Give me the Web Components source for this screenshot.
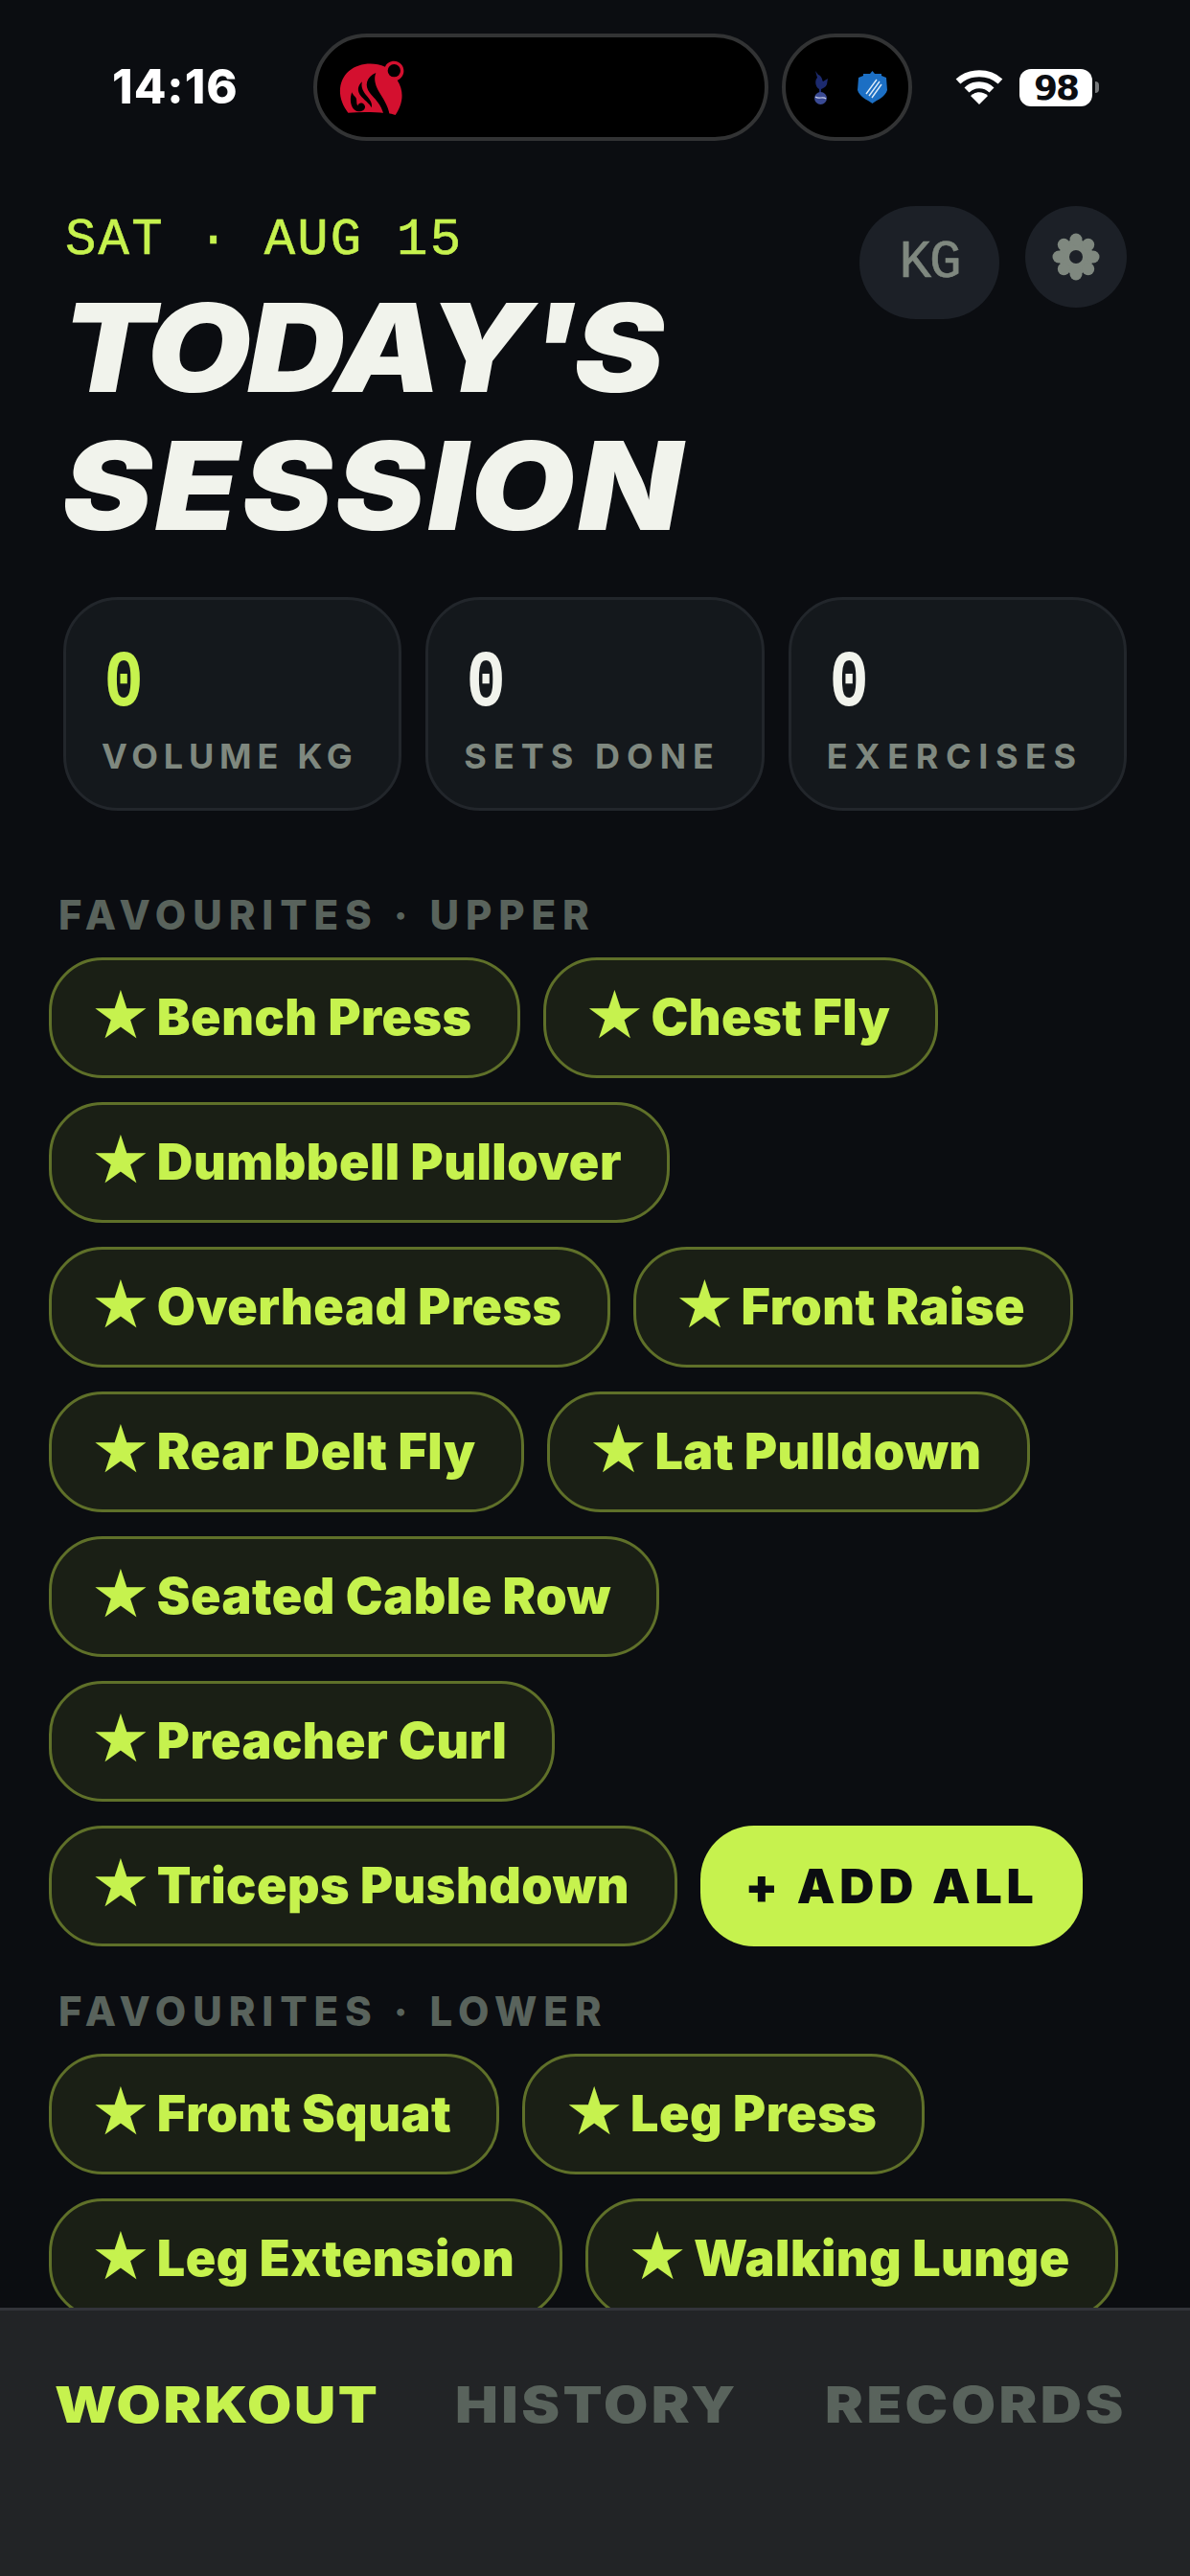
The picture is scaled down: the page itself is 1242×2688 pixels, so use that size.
<!DOCTYPE html>
<html>
<head>
<meta charset="utf-8">
<style>
    html, body { margin: 0; background: #0b0d11; }
    body { width: 1242px; height: 2688px; overflow: hidden; font-family: Inter, "Liberation Sans", sans-serif; }
</style>
</head>
<body>
<app-shell>
    <status-bar></status-bar>
    <session-header></session-header>
    <stat-row>
        <stat-card value="0" label="VOLUME KG" spacing="5.8" accent></stat-card>
        <stat-card value="0" label="SETS DONE" spacing="7"></stat-card>
        <stat-card value="0" label="EXERCISES" spacing="7.6"></stat-card>
    </stat-row>
    <fav-section title="FAVOURITES · UPPER">
        <fav-chip>Bench Press</fav-chip>
        <fav-chip>Chest Fly</fav-chip>
        <fav-chip>Dumbbell Pullover</fav-chip>
        <fav-chip>Overhead Press</fav-chip>
        <fav-chip>Front Raise</fav-chip>
        <fav-chip>Rear Delt Fly</fav-chip>
        <fav-chip>Lat Pulldown</fav-chip>
        <fav-chip>Seated Cable Row</fav-chip>
        <fav-chip>Preacher Curl</fav-chip>
        <fav-chip>Triceps Pushdown</fav-chip>
        <add-all></add-all>
    </fav-section>
    <fav-section title="FAVOURITES · LOWER">
        <fav-chip>Front Squat</fav-chip>
        <fav-chip>Leg Press</fav-chip>
        <fav-chip>Leg Extension</fav-chip>
        <fav-chip>Walking Lunge</fav-chip>
    </fav-section>
    <tab-bar slot="tabs"></tab-bar>
</app-shell>

<script>
class AppShell extends HTMLElement {
    constructor () {
        super();
        this.attachShadow({ mode: 'open' });
        this.shadowRoot.innerHTML = `
        <style>
            :host { display: flex; flex-direction: column; height: 2688px; }
            main { flex: 1; min-height: 0; overflow: hidden; }
        </style>
        <main><slot></slot></main>
        <slot name="tabs"></slot>
        `;
    }
}

class StatusBar extends HTMLElement {
    constructor () {
        super();
        this.attachShadow({ mode: 'open' });
        this.shadowRoot.innerHTML = `
        <style>
            :host { display: flex; align-items: center; height: 112px; padding: 35px 0 0 117px; color: #fff; }
            .time { width: 128px; margin-right: 82px; font: 800 49px/1 Inter, sans-serif; letter-spacing: 1px; white-space: nowrap; position: relative; top: -1px; }
            .island { box-sizing: border-box; height: 112px; background: #000; border: 4px solid #323334; border-radius: 56px; display: flex; align-items: center; }
            .main { width: 475px; padding-left: 23px; margin-right: 14px; }
            .teams { width: 136px; padding-left: 6px; justify-content: center; gap: 30px; }
            .wifi { margin-left: 45px; }
            .battery { margin-left: 17px; width: 76px; height: 39px; background: #fff; border-radius: 12px; color: #0b0d11; font: 700 36px/39px "DejaVu Sans", sans-serif; text-align: center; letter-spacing: -2px; }
            .nub { margin-left: 3px; width: 4px; height: 12px; background: #77797b; border-radius: 0 6px 6px 0; }
            svg { display: block; }
        </style>
        <div class="time">14:16</div>
        <div class="island main">
            <svg width="70" height="60" viewBox="100 120 210 180">
                <path fill="#d4102f" d="M128 290 C92 245 96 190 130 160 C160 135 205 130 244 146 C250 128 280 120 296 140 C310 160 298 182 282 188 C306 225 298 265 276 297 C262 290 190 285 128 290Z"/>
                <circle cx="272" cy="158" r="20" fill="#000"/>
                <path fill="#000" d="M215 165 C185 178 178 205 196 228 C210 246 232 262 240 298 L258 298 C254 268 236 244 222 220 C212 200 208 182 215 165Z"/>
                <path fill="#000" d="M172 193 C158 205 154 222 170 240 C185 256 196 262 201 274 C206 260 194 246 182 232 C172 218 168 206 172 193Z"/>
                <path fill="#000" d="M140 226 C130 250 138 284 160 286 C178 286 186 274 178 264 C170 256 160 260 158 268 C152 260 158 248 150 240 C146 236 142 232 140 226Z"/>
            </svg>
        </div>
        <div class="island teams">
            <svg width="17" height="36" viewBox="0 0 17 36">
                <path fill="#1c2a6e" d="M3 1 L6 5 C10 6 10 11 11 12 L16 9 L15 15 C14 18 11 19 9 20 L9 24 L7 24 L7 20 C3 18 2 11 5 8 Z"/>
                <circle cx="8.5" cy="29.5" r="6.5" fill="#3a4a94"/>
                <path stroke="#c9d0ea" stroke-width="1.2" fill="none" d="M3 28 C7 31 11 27 14 30"/>
            </svg>
            <svg width="31" height="34" viewBox="0 0 31 34">
                <path fill="#1c6fc4" d="M15.5 0 L18 3 L25 3 L25 5 L30 7 L31 20 C29 27 21 30 15.5 34 C10 30 2 27 0 20 L1 7 L6 5 L6 3 L13 3Z"/>
                <path stroke="#dcebf8" stroke-width="1.4" fill="none" d="M9 24 L20 9 M12 26 L23 11 M15 28 L25 14"/>
            </svg>
        </div>
        <svg class="wifi" width="50" height="36" viewBox="0 0 50 36">
            <path fill="none" stroke="#fff" stroke-width="7" d="M3 12 C15 1 35 1 47 12"/>
            <path fill="none" stroke="#fff" stroke-width="7" d="M12 21 C19 14 31 14 38 21"/>
            <path fill="#fff" d="M25 36 L16 27 C21 22 29 22 34 27Z"/>
        </svg>
        <div class="battery">98</div>
        <div class="nub"></div>
        `;
    }
}

class SessionHeader extends HTMLElement {
    constructor () {
        super();
        this.attachShadow({ mode: 'open' });
        this.shadowRoot.innerHTML = `
        <style>
            :host { display: flex; justify-content: space-between; align-items: flex-start; padding: 68px 66px 0 68px; }
            .date { padding-top: 9px; color: #c6f24e; font: 400 54px/54px "Liberation Mono", monospace; letter-spacing: 2.2px; white-space: pre; -webkit-text-stroke: 0.6px #c6f24e; }
            h1 { margin: 13px 0 0 -3px; color: #f1f3ec; font: italic 900 128px/144px Inter, "Liberation Sans", sans-serif; white-space: nowrap; transform: scaleX(1.1); transform-origin: left; }
            .l1 { letter-spacing: -3.6px; }
            .l2 { letter-spacing: 2.9px; }
            .actions { display: flex; gap: 27px; }
            .unit { box-sizing: border-box; width: 146px; height: 118px; border-radius: 59px; background: #1c2027; color: #7f887f; font: 400 56px/118px "Liberation Mono", monospace; letter-spacing: -2px; text-align: center; -webkit-text-stroke: 0.6px #7f887f; }
            .gear { width: 106px; height: 106px; border-radius: 50%; background: #1c2027; display: flex; align-items: center; justify-content: center; }
        </style>
        <div>
            <div class="date">SAT · AUG 15</div>
            <h1><span class="l1">TODAY'S</span><br><span class="l2">SESSION</span></h1>
        </div>
        <div class="actions">
            <div class="unit">KG</div>
            <div class="gear">
                <svg width="50" height="50" viewBox="-25 -25 50 50">
                    <g fill="#7f887f">
                        <circle r="18"/>
                        <circle cx="0" cy="-18" r="6.5"/><circle cx="0" cy="18" r="6.5"/>
                        <circle cx="-18" cy="0" r="6.5"/><circle cx="18" cy="0" r="6.5"/>
                        <circle cx="12.7" cy="-12.7" r="6.5"/><circle cx="-12.7" cy="-12.7" r="6.5"/>
                        <circle cx="12.7" cy="12.7" r="6.5"/><circle cx="-12.7" cy="12.7" r="6.5"/>
                    </g>
                    <circle r="7" fill="#1c2027"/>
                </svg>
            </div>
        </div>
        `;
    }
}

class StatRow extends HTMLElement {
    constructor () {
        super();
        this.attachShadow({ mode: 'open' });
        this.shadowRoot.innerHTML = `
        <style>
            :host { display: grid; grid-template-columns: repeat(3, 1fr); gap: 25px; margin: 0 66px; padding-top: 44px; }
        </style>
        <slot></slot>
        `;
    }
}

class StatCard extends HTMLElement {
    constructor () {
        super();
        this.attachShadow({ mode: 'open' });
    }

    connectedCallback () {
        this.shadowRoot.innerHTML = `
        <style>
            :host { box-sizing: border-box; display: block; height: 223px; background: #14181c; border: 3px solid #22262b; border-radius: 57px; padding: 46px 0 0 37px; }
            .value { color: ${this.hasAttribute('accent') ? '#c6f24e' : '#f1f3ec'}; font: 700 84px/84px "Liberation Mono", monospace; padding-left: 3px; transform: scaleX(0.82); transform-origin: left; }
            .label { margin-top: 11px; color: #7f887f; font: 700 36px/44px Inter, sans-serif; letter-spacing: ${this.getAttribute('spacing')}px; white-space: nowrap; }
        </style>
        <div class="value">${this.getAttribute('value')}</div>
        <div class="label">${this.getAttribute('label')}</div>
        `;
    }
}

class FavSection extends HTMLElement {
    constructor () {
        super();
        this.attachShadow({ mode: 'open' });
    }

    connectedCallback () {
        this.shadowRoot.innerHTML = `
        <style>
            :host { display: block; padding: 0 51px; margin-top: 85px; }
            :host(:nth-of-type(2)) { margin-top: 44px; }
            .title { padding-left: 10px; color: #59635c; font: 800 42px/48px Inter, sans-serif; letter-spacing: 6.9px; margin-bottom: 20px; }
            .chips { display: flex; flex-wrap: wrap; gap: 25px 24px; }
        </style>
        <div class="title">${this.getAttribute('title')}</div>
        <div class="chips"><slot></slot></div>
        `;
    }
}

class FavChip extends HTMLElement {
    constructor () {
        super();
        this.attachShadow({ mode: 'open' });
        this.shadowRoot.innerHTML = `
        <style>
            :host { box-sizing: border-box; display: flex; align-items: center; gap: 7px; height: 126px; padding: 0 47px 0 41px; background: #1a1f15; border: 3px solid #5f7029; border-radius: 56px; color: #c6f24e; font: 900 52px/1 Inter, sans-serif; letter-spacing: 0.5px; white-space: nowrap; }
            .star { font: 400 69px/1 "DejaVu Sans", sans-serif; letter-spacing: 0; position: relative; top: -3px; }
        </style>
        <span class="star">★</span><slot></slot>
        `;
    }
}

class AddAll extends HTMLElement {
    constructor () {
        super();
        this.attachShadow({ mode: 'open' });
        this.shadowRoot.innerHTML = `
        <style>
            :host { box-sizing: border-box; display: flex; align-items: center; justify-content: center; width: 399px; height: 126px; background: #c6f24e; border-radius: 56px; color: #0b0d11; font: 900 50px/1 Inter, sans-serif; letter-spacing: 4.8px; white-space: nowrap; }
        </style>
        + ADD ALL
        `;
    }
}

class TabBar extends HTMLElement {
    constructor () {
        super();
        this.attachShadow({ mode: 'open' });
        this.shadowRoot.innerHTML = `
        <style>
            :host { box-sizing: border-box; display: grid; grid-template-columns: 418px 386px auto; align-items: start; height: 280px; padding: 73px 0 0 57px; background: #222426; border-top: 3px solid #32343a; color: #59635c; font: 900 52px/52px Inter, sans-serif; letter-spacing: 3px; position: relative; z-index: 1; }
            span { transform: scaleX(1.15); transform-origin: left; white-space: nowrap; }
            .on { color: #c6f24e; letter-spacing: 2.2px; }
        </style>
        <span class="on">WORKOUT</span><span>HISTORY</span><span>RECORDS</span>
        `;
    }
}

customElements.define('app-shell', AppShell);
customElements.define('status-bar', StatusBar);
customElements.define('session-header', SessionHeader);
customElements.define('stat-row', StatRow);
customElements.define('stat-card', StatCard);
customElements.define('fav-section', FavSection);
customElements.define('fav-chip', FavChip);
customElements.define('add-all', AddAll);
customElements.define('tab-bar', TabBar);
</script>
</body>
</html>
